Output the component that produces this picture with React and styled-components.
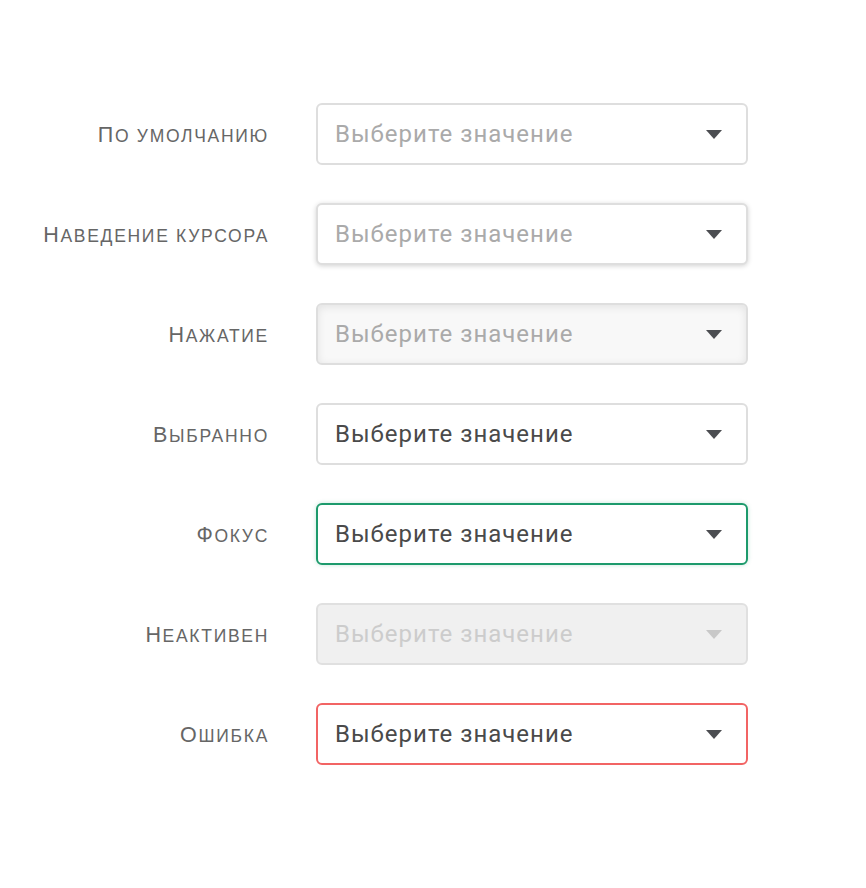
import React from "react";
import styled, { createGlobalStyle, css } from "styled-components";

const GlobalStyle = createGlobalStyle`
  body {
    margin: 0;
    background: #ffffff;
  }
`;

const Page = styled.div`
  display: grid;
  grid-template-columns: 269px 432px;
  column-gap: 47px;
  row-gap: 38px;
  padding-top: 103px;
  align-items: baseline;
`;

const Label = styled.div`
  font-family: "Liberation Sans", Arial, sans-serif;
  font-size: 17.5px;
  text-transform: uppercase;
  letter-spacing: 1.7px;
  color: #666666;
  text-align: right;

  &::first-letter {
    font-size: 21.5px;
  }
`;

const variants = {
  default: css`
    border-color: #dedede;
  `,
  hover: css`
    border-color: #dedede;
    box-shadow: 0 1px 5px rgba(0, 0, 0, 0.18);
  `,
  pressed: css`
    border-color: #dedede;
    background: #f8f8f8;
    box-shadow: inset 0 2px 9px rgba(0, 0, 0, 0.09);
  `,
  selected: css`
    border-color: #dedede;
  `,
  focus: css`
    border-color: #1d9a6c;
    box-shadow: 0 0 4px rgba(29, 154, 108, 0.25);
  `,
  disabled: css`
    border-color: #e0e0e0;
    background: #f0f0f0;
  `,
  error: css`
    border-color: #f26464;
  `,
};

const SelectBox = styled.div`
  box-sizing: border-box;
  height: 62px;
  border: 2px solid;
  border-radius: 6px;
  background: #ffffff;
  display: flex;
  align-items: center;
  justify-content: space-between;
  padding: 0 24px 0 17px;
  ${(p) => variants[p.$variant]}
`;

const Value = styled.span`
  font-family: Roboto, "Liberation Sans", sans-serif;
  font-size: 24px;
  letter-spacing: 1px;
  color: ${(p) => (p.$muted === "light" ? "#cccccc" : p.$muted ? "#aaaaaa" : "#4a4a4a")};
`;

const Arrow = styled.svg`
  width: 16px;
  height: 9px;
  fill: ${(p) => (p.$disabled ? "#c8c8c8" : "#4b4d51")};
`;

const rows = [
  { label: "По умолчанию", variant: "default", muted: true },
  { label: "Наведение курсора", variant: "hover", muted: true },
  { label: "Нажатие", variant: "pressed", muted: true },
  { label: "Выбранно", variant: "selected", muted: false },
  { label: "Фокус", variant: "focus", muted: false },
  { label: "Неактивен", variant: "disabled", muted: "light" },
  { label: "Ошибка", variant: "error", muted: false },
];

const App = () => {
  return (
    <>
      <GlobalStyle />
      <Page>
        {rows.map((r) => (
          <React.Fragment key={r.variant}>
            <Label>{r.label}</Label>
            <SelectBox $variant={r.variant}>
              <Value $muted={r.muted}>Выберите значение</Value>
              <Arrow viewBox="0 0 16 9" $disabled={r.variant === "disabled"}>
                <path d="M0 0 H16 L8 9 Z" />
              </Arrow>
            </SelectBox>
          </React.Fragment>
        ))}
      </Page>
    </>
  );
};

export default App;
